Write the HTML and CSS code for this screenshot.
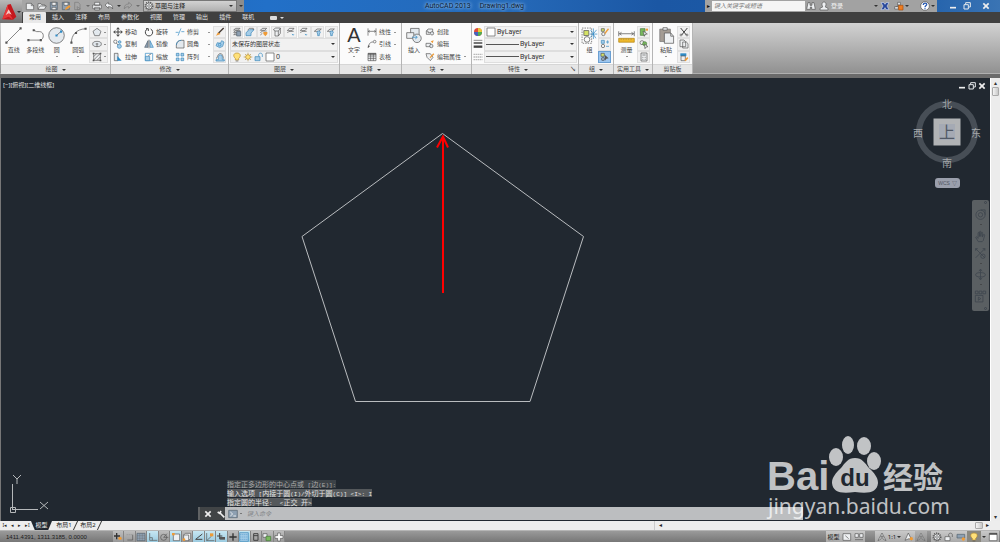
FILE: index.html
```html
<!DOCTYPE html>
<html lang="zh-CN">
<head>
<meta charset="utf-8">
<title>AutoCAD 2013 Drawing1.dwg</title>
<link rel="stylesheet" href="styles.css">
</head>
<body>
<svg class="defs" aria-hidden="true">
  <symbol id="new" viewBox="0 0 30 30"><path class="paper" d="M4 7h15l7 7v12H4z"/><path d="M19 7v7h7"/></symbol>
  <symbol id="open" viewBox="0 0 30 30"><path class="paper" d="M3 25V8h9l3 4h9v5"/><path class="paper" d="M3 25l6-10h19l-6 10z"/></symbol>
  <symbol id="save" viewBox="0 0 30 30"><path class="steel" d="M4 4h21v22H4z"/><path class="paper" d="M9 4h12v9H9zM9 19h12v7H9z"/></symbol>
  <symbol id="saveas" viewBox="0 0 30 30"><path class="steel" d="M4 4h21v22H4z"/><path class="paper" d="M9 4h12v9H9z"/><path class="gold" d="M12 27l2-7 11-8 4 5-11 8z"/></symbol>
  <symbol id="export" viewBox="0 0 30 30"><path d="M5 4h11l5 6v16H5zM12 17l10 6-8 4z"/></symbol>
  <symbol id="print" viewBox="0 0 30 30"><path class="paper" d="M8 4h15v9H8zM2 12h26v11H2zM8 19h15v8H8z"/></symbol>
  <symbol id="undo" viewBox="0 0 30 30"><path class="paper" d="M3 12L13 4v5c9 0 14 5 13 15-3-6-7-7-13-7v5z"/></symbol>
  <symbol id="redo" viewBox="0 0 30 30"><path d="M27 12L17 4v5C8 9 3 14 4 24c3-6 7-7 13-7v5z"/></symbol>
  <symbol id="gear" viewBox="0 0 30 30"><circle class="dash" cx="15" cy="15" r="11"/><circle class="paper" cx="15" cy="15" r="9"/><circle cx="15" cy="15" r="4"/></symbol>
  <symbol id="line" viewBox="0 0 48 48"><path d="M4 44L44 4"/><path class="ink" d="M1 41h6v6H1zM41 1h6v6h-6z"/></symbol>
  <symbol id="pline" viewBox="0 0 48 48"><path d="M4 37h34c11-3 11-23-2-24h-9l-8-4"/><path class="ink" d="M1 34h6v6H1zM36 34h6v6h-6zM16 6h6v6h-6z"/></symbol>
  <symbol id="circle" viewBox="0 0 48 48"><circle class="pale" cx="24" cy="24" r="22"/><path d="M24 24L36 13"/><path class="azure" d="M21 21h6v6h-6zM34 10h6v6h-6z"/></symbol>
  <symbol id="arc" viewBox="0 0 48 48"><path d="M4 44C4 24 17 6 44 5"/><path class="ink" d="M1 41h6v6H1zM14 14h6v6h-6zM41 2h6v6h-6z"/></symbol>
  <symbol id="polygon" viewBox="0 0 30 30"><path class="pale" d="M15 4l12 9-5 13H8L3 13z"/></symbol>
  <symbol id="ellipse" viewBox="0 0 30 30"><ellipse class="pale" cx="15" cy="15" rx="13" ry="8"/><path d="M15 12v12M11 15h8"/></symbol>
  <symbol id="hatch" viewBox="0 0 30 30"><path class="paper" d="M5 5h20v20H5zM5 14L14 5M5 24L24 5M15 25l10-10"/><path class="ink" d="M2 2h5v5H2zM23 2h5v5h-5zM2 23h5v5H2zM23 23h5v5h-5z"/></symbol>
  <symbol id="move" viewBox="0 0 30 30"><path class="firm" d="M15 3v24M3 15h24M11 7l4-5 4 5M11 23l4 5 4-5M7 11l-5 4 5 4M23 11l5 4-5 4"/></symbol>
  <symbol id="rotate" viewBox="0 0 30 30"><path class="firm" d="M10 6a11 11 0 1 0 10 0M6 5h7v7"/></symbol>
  <symbol id="trim" viewBox="0 0 30 30"><path class="azline" d="M2 16h9M19 14h9"/><path class="azline" d="M9 26L18 4"/></symbol>
  <symbol id="copy" viewBox="0 0 30 30"><circle cx="7" cy="8" r="5"/><circle class="sky" cx="20" cy="9" r="4"/><circle class="sky" cx="19" cy="22" r="6"/><path d="M10 12l5 6"/></symbol>
  <symbol id="mirror" viewBox="0 0 30 30"><path class="steel" d="M12 5v20H2z"/><path class="sky" d="M18 5v20h10z"/><path d="M15 2v26"/></symbol>
  <symbol id="fillet" viewBox="0 0 30 30"><path class="pale" d="M4 27V18C5 9 10 4 19 4h8v23z"/><path class="azline" d="M4 18C5 9 10 4 19 4"/></symbol>
  <symbol id="stretch" viewBox="0 0 30 30"><path class="pale" d="M4 4h11v22H4z"/><path class="azure" d="M13 12l13 14H13z"/></symbol>
  <symbol id="scale" viewBox="0 0 30 30"><path class="azline" d="M4 4h22v22H4z"/><path class="sky" d="M4 13h13v13H4z"/><path d="M13 11l9-6"/></symbol>
  <symbol id="array" viewBox="0 0 30 30"><path class="sky" d="M4 4h8v8H4zM18 4h8v8h-8zM4 18h8v8H4z"/><path class="sky" d="M18 18h8v8h-8z"/></symbol>
  <symbol id="brush" viewBox="0 0 30 30"><path class="gold" d="M3 26l6-10 8 5z"/><path class="dark" d="M11 18L26 3"/></symbol>
  <symbol id="explode" viewBox="0 0 30 30"><path class="sky" d="M3 20l4-9 9 2 4-8 7 4-4 13-9 4z"/><circle class="azline" cx="14" cy="17" r="4"/></symbol>
  <symbol id="offset" viewBox="0 0 30 30"><path class="sky" d="M3 23h7v-7c0-10 12-10 12 0v7h6v4H3z"/><path d="M3 20c4 0 4-13 11-15s9 4 12 15"/></symbol>
  <symbol id="layer" viewBox="0 0 30 30"><path class="paper" d="M5 9l6-5h13l-5 5zM5 16l6-5h13l-5 5zM5 23l6-5h13l-5 5z"/><path class="steel" d="M14 13h12v14H14z"/></symbol>
  <symbol id="layer2" viewBox="0 0 30 30"><path class="sky" d="M3 17L14 8h13l-9 10v8H3z"/><path d="M8 10l5-6h12v5"/></symbol>
  <symbol id="layer3" viewBox="0 0 30 30"><path class="paper" d="M4 10l6-6h13l-6 6zM4 18l6-6h13M4 24l6-5"/><path class="gold" d="M13 15h12v6l-6 7-6-7z"/></symbol>
  <symbol id="layer4" viewBox="0 0 30 30"><path class="paper" d="M4 8l7-5h14v16l-6 8H9V12z"/><path d="M9 12h10v15M19 12l6-8"/></symbol>
  <symbol id="layer5" viewBox="0 0 30 30"><path class="paper" d="M4 11l6-7h14l-6 7zM4 18l5-5h14"/><path class="azure" d="M6 25h14l-3-5 9 4"/></symbol>
  <symbol id="layer6" viewBox="0 0 30 30"><path class="paper" d="M4 13l8-7h13l-8 7z"/><path class="sky" d="M12 16c1-6 10-5 10 0l-3 5v5h-5v-5z"/></symbol>
  <symbol id="bulb" viewBox="0 0 30 30"><path class="lamp" d="M15 3c-12 0-12 11-5 16v5h10v-5c7-5 7-16-5-16z"/><path d="M11 27h8"/></symbol>
  <symbol id="sun" viewBox="0 0 30 30"><path class="ray" d="M15 2v26M2 15h26M6 6l18 18M24 6L6 24"/><circle class="lamp" cx="15" cy="15" r="7"/></symbol>
  <symbol id="lock" viewBox="0 0 30 30"><path class="sky" d="M3 14h15v12H3z"/><path class="azline" d="M14 13V8c0-6 11-6 11 0v7"/></symbol>
  <symbol id="swatch" viewBox="0 0 30 30"><path class="white" d="M3 3h24v24H3z"/></symbol>
  <symbol id="dim" viewBox="0 0 30 30"><path d="M3 4v22M27 4v22M4 13h22M8 10l-4 3 4 3M22 10l4 3-4 3"/></symbol>
  <symbol id="leader" viewBox="0 0 30 30"><path d="M4 26C6 14 9 9 18 9"/><circle cx="23" cy="8" r="4"/><path class="ink" d="M2 27l1-8 6 3z"/></symbol>
  <symbol id="table" viewBox="0 0 30 30"><path class="paper" d="M3 4h24v22H3zM3 12h24M3 19h24M11 5v21M19 5v21"/><path class="ink" d="M3 4h24v4H3z"/></symbol>
  <symbol id="insert" viewBox="0 0 48 48"><path class="pale" d="M13 4h24v22H13z"/><path class="paper" d="M2 16h20v16H2z"/><circle class="pale" cx="31" cy="32" r="12"/><path class="azline" d="M17 29h14M26 24l6 5-6 5"/></symbol>
  <symbol id="create" viewBox="0 0 30 30"><path class="paper" d="M4 12L9 6h14v11H9v-5zM4 12v10h11"/><circle class="pale" cx="21" cy="19" r="5"/></symbol>
  <symbol id="edit" viewBox="0 0 30 30"><path class="paper" d="M3 13h14v10H3z"/><circle class="pale" cx="19" cy="21" r="5"/><path class="gold" d="M17 7l9-3-3 9z"/></symbol>
  <symbol id="attr" viewBox="0 0 30 30"><path class="paper" d="M3 5h13l8 11-8 10L6 16z"/><path class="gold" d="M14 16L25 4l3 3-12 12z"/></symbol>
  <symbol id="wheel" viewBox="0 0 30 30"><circle class="wheel1" cx="15" cy="15" r="12"/><path class="wheel2" d="M15 15V3a12 12 0 0 1 12 12z"/><path class="wheel3" d="M15 15h12a12 12 0 0 1-12 12z"/><path class="wheel4" d="M15 15v12A12 12 0 0 1 3 15z"/></symbol>
  <symbol id="weight" viewBox="0 0 30 30"><path d="M2 4h26"/><path class="mid" d="M2 12h26"/><path class="thick" d="M2 23h26"/></symbol>
  <symbol id="ltype" viewBox="0 0 30 30"><path class="dots" d="M2 7h26M2 15h26M2 23h26"/></symbol>
  <symbol id="group" viewBox="0 0 48 48"><path class="dashline" d="M3 3h27v43H3z"/><path class="lime" d="M8 10h14v14H8z"/><circle cx="17" cy="35" r="8"/><path class="azline" d="M24 20h22M26 30L44 8M27 8l15 24M35 4v30"/></symbol>
  <symbol id="ungroup" viewBox="0 0 30 30"><path class="lime" d="M4 5h9v8H4z"/><circle cx="10" cy="21" r="5"/><path class="gold" d="M13 18L24 4l3 3-11 14z"/></symbol>
  <symbol id="groupedit" viewBox="0 0 30 30"><path class="sky" d="M4 4h9v9H4z"/><circle cx="9" cy="21" r="5"/><path class="azline" d="M18 9h9M23 4v10M18 22h9"/></symbol>
  <symbol id="groupsel" viewBox="0 0 30 30"><path class="lime" d="M3 4h10v9H3z"/><circle class="steel" cx="9" cy="21" r="5"/><path class="ink" d="M14 8l12 11-7 1-4 6z"/></symbol>
  <symbol id="measure" viewBox="0 0 48 48"><path d="M2 12v14M46 12v14M4 19h40M10 15l-6 4 6 4M38 15l6 4-6 4"/><path class="amber" d="M2 32h44v11H2z"/><path class="thin" d="M9 33v4M16 33v4M23 33v4M30 33v4M37 33v4"/></symbol>
  <symbol id="qsel" viewBox="0 0 30 30"><path class="leaf" d="M4 5h14v20H4z"/><path class="paper" d="M12 12l13 9-7 1-2 6z"/><path class="gold" d="M20 5h7v6h-7z"/></symbol>
  <symbol id="selall" viewBox="0 0 30 30"><circle class="paper" cx="9" cy="11" r="6"/><circle class="leaf" cx="17" cy="14" r="6"/><path class="paper" d="M16 15l11 8-6 1-3 5z"/></symbol>
  <symbol id="calc" viewBox="0 0 30 30"><path class="paper" d="M6 3h18v24H6z"/><path d="M10 9h10M10 16h2M14 16h2M18 16h2M10 22h2M14 22h2M18 22h2"/></symbol>
  <symbol id="paste" viewBox="0 0 48 48"><path class="clip" d="M5 6h30v35H5z"/><path class="paper" d="M14 2h12v7H14zM18 17h18l8 9v20H18z"/><path d="M36 17v9h8"/></symbol>
  <symbol id="cut" viewBox="0 0 30 30"><path class="firm" d="M5 3l17 21M25 3L8 24"/><circle cx="6" cy="24" r="3"/><circle cx="24" cy="24" r="3"/></symbol>
  <symbol id="clip" viewBox="0 0 30 30"><path class="paper" d="M3 3h12l5 5v15H3zM11 9h11l5 5v13H11z"/></symbol>
  <symbol id="match" viewBox="0 0 30 30"><path class="azure" d="M4 4h18v8H4z"/><path class="paper" d="M6 12h13v14H6z"/><path class="gold" d="M16 24l9-9 3 4-8 9z"/></symbol>
  <symbol id="binoc" viewBox="0 0 30 30"><path class="paper" d="M6 5h6v8h6V5h6l4 20H17v-7h-4v7H2z"/></symbol>
  <symbol id="person" viewBox="0 0 30 30"><path class="paper" d="M15 3c8 0 7 12 3 14l9 5v5H3v-5l9-5C8 15 7 3 15 3z"/></symbol>
  <symbol id="exchange" viewBox="0 0 30 30"><path class="navy" d="M3 5h9l3 5 3-5h9l-6 10 6 11h-9l-3-6-3 6H3l6-11z"/></symbol>
  <symbol id="cloud" viewBox="0 0 30 30"><path class="paper" d="M11 4h8v8h-8zM2 17h11v7H2z"/><path d="M15 12L7 17"/><path class="orange" d="M14 13h13v14H14z"/></symbol>
  <symbol id="help" viewBox="0 0 30 30"><circle class="white" cx="15" cy="15" r="13"/><path class="question" d="M10 12c0-8 11-7 10-1-1 4-5 3-5 8M15 22v3"/></symbol>
  <symbol id="min" viewBox="0 0 30 30"><path class="bright" d="M6 20h18"/></symbol>
  <symbol id="restore" viewBox="0 0 30 30"><path class="glow" d="M11 10V5h14v13h-5M6 11h13v13H6z"/></symbol>
  <symbol id="close" viewBox="0 0 30 30"><path class="bright" d="M7 7l16 16M23 7L7 23"/></symbol>
  <symbol id="wrench" viewBox="0 0 30 30"><path class="bright" d="M12 12l13 13M5 9l6 4 4-7"/></symbol>
  <symbol id="prompt" viewBox="0 0 30 30"><path class="steel" d="M2 4h26v22H2z"/><path class="glow" d="M7 9l7 6-7 6M16 21h8"/></symbol>
  <symbol id="plus" viewBox="0 0 30 30"><path class="mid" d="M15 4v22M4 15h22"/></symbol>
  <symbol id="infer" viewBox="0 0 30 30"><path class="mid" d="M11 3v19M3 12h18"/><circle class="gold" cx="21" cy="19" r="5"/></symbol>
  <symbol id="snap" viewBox="0 0 30 30"><path class="dots" d="M5 8h16"/><path d="M23 8v16H7"/></symbol>
  <symbol id="grid" viewBox="0 0 30 30"><path class="steel" d="M3 4h24v22H3z"/><path class="thin" d="M3 11h24M3 19h24M11 4v22M19 4v22"/></symbol>
  <symbol id="ortho" viewBox="0 0 30 30"><path d="M5 3v22h23M5 17h8v8"/></symbol>
  <symbol id="polar" viewBox="0 0 30 30"><circle cx="14" cy="16" r="9"/><path d="M14 16h14M14 16L24 5"/></symbol>
  <symbol id="osnap" viewBox="0 0 30 30"><path class="paper" d="M7 6h19v20H7z"/><path class="gold" d="M3 3h8v7H3z"/></symbol>
  <symbol id="osnap3" viewBox="0 0 30 30"><path class="paper" d="M5 9l5-5h16v15l-6 7H5zM5 9h15v17"/><circle class="gold" cx="6" cy="23" r="4"/></symbol>
  <symbol id="track" viewBox="0 0 30 30"><path class="firm" d="M25 6L5 22h20"/></symbol>
  <symbol id="ducs" viewBox="0 0 30 30"><path d="M5 3v23h23M5 26L20 12"/><path class="gold" d="M15 4h10v9H15z"/></symbol>
  <symbol id="dyn" viewBox="0 0 30 30"><path class="firm" d="M11 3v18M3 12h16"/><path class="ink" d="M11 15h16v8H11z"/></symbol>
  <symbol id="tpy" viewBox="0 0 30 30"><path class="sky" d="M2 2h26v26H2z"/><path class="mesh" d="M4 8h22M4 15h22M4 22h22"/></symbol>
  <symbol id="qp" viewBox="0 0 30 30"><path class="firm" d="M8 5h13v20H8zM8 11h13"/></symbol>
  <symbol id="sc" viewBox="0 0 30 30"><path class="paper" d="M3 5h12v11H3z"/><path class="leaf" d="M12 13h14v13H12z"/></symbol>
  <symbol id="cross" viewBox="0 0 30 30"><path class="white" d="M11 3h8v8h8v8h-8v8h-8v-8H3v-8h8z"/></symbol>
  <symbol id="model" viewBox="0 0 30 30"><path class="paper" d="M3 5h23v20H3zM10 11l10 9"/></symbol>
  <symbol id="views" viewBox="0 0 30 30"><path class="paper" d="M3 5h10v11H3zM17 5h10v11H17zM3 23h24"/></symbol>
  <symbol id="anno" viewBox="0 0 30 30"><path class="paper" d="M15 3l12 23-9-5v-9h-6v9l-9 5z"/></symbol>
  <symbol id="annogold" viewBox="0 0 30 30"><path class="paper" d="M13 3l10 21-8-4-12 5z"/><circle class="gold" cx="22" cy="20" r="5"/></symbol>
  <symbol id="padlock" viewBox="0 0 30 30"><path class="paper" d="M3 14h15v12H3z"/><path d="M14 13V8c0-6 11-6 11 0v7"/></symbol>
  <symbol id="hardware" viewBox="0 0 30 30"><path class="steel" d="M3 7h23v11H3z"/><circle class="gold" cx="22" cy="21" r="5"/></symbol>
  <symbol id="clean" viewBox="0 0 30 30"><path class="white" d="M4 4h23v22H4z"/><path class="mid" d="M4 6h23"/></symbol>
  <symbol id="swheel" viewBox="0 0 48 48"><circle cx="24" cy="25" r="17"/><circle cx="24" cy="25" r="8"/><path d="M41 25V7H25"/></symbol>
  <symbol id="hand" viewBox="0 0 48 48"><path d="M16 43L6 27c2-4 6-1 9 4V11c2-4 5-3 5 0v13-17c2-4 5-3 5 0v17l2-14c3-4 5-1 5 2l-1 14 4-9c4-2 5 1 4 4l-5 18-4 4z"/></symbol>
  <symbol id="zoomall" viewBox="0 0 48 48"><path d="M6 6l34 34M40 6L6 40M6 14V6h8M32 6h8v8"/><circle cx="33" cy="34" r="8"/></symbol>
  <symbol id="orbit" viewBox="0 0 48 48"><ellipse cx="24" cy="25" rx="18" ry="8"/><path d="M24 5v38M18 12l6-8 6 8M18 36l6 8 6-8"/></symbol>
  <symbol id="motion" viewBox="0 0 48 48"><path d="M5 4h10v10H5zM19 4h10v10H19zM33 4h10v10H33zM5 20h28v24H5zM16 26l9 6-9 6z"/></symbol>
</svg>

<header class="header">
  <button class="logo" aria-label="应用程序菜单">
    <svg class="logo-mark" viewBox="0 0 48 54"><path class="logo-back" d="M4 49L20 5l9-2 17 38-10 9z"/><path class="logo-fold" d="M4 49l16-44 3 22 13 23-13-9z"/><path class="logo-light" d="M14 36l9-17 9 16-9-4z"/></svg>
    <i class="caret"></i>
  </button>
  <div class="titlebar">
    <nav class="quick" aria-label="快速访问">
      <button aria-label="新建"><svg class="ico"><use href="#new"/></svg></button>
      <button aria-label="打开"><svg class="ico"><use href="#open"/></svg></button>
      <button aria-label="保存"><svg class="ico"><use href="#save"/></svg></button>
      <button aria-label="另存为"><svg class="ico"><use href="#saveas"/></svg></button>
      <button class="wide faded" aria-label="输出"><svg class="ico"><use href="#export"/></svg><i class="caret"></i></button>
      <button aria-label="打印"><svg class="ico"><use href="#print"/></svg></button>
      <button class="wide" aria-label="放弃"><svg class="ico"><use href="#undo"/></svg><i class="caret"></i></button>
      <button class="wide faded" aria-label="重做"><svg class="ico"><use href="#redo"/></svg><i class="caret"></i></button>
    </nav>
    <label class="workspace"><svg class="ico"><use href="#gear"/></svg><select aria-label="工作空间"><option>草图与注释</option></select><i class="caret"></i></label>
    <button class="more" aria-label="自定义"><i class="caret"></i></button>
    <div class="caption"><span>AutoCAD 2013</span><span>Drawing1.dwg</span></div>
    <div class="info">
      <button class="expand" aria-label="展开">▸</button>
      <input class="search" type="text" placeholder="键入关键字或短语" aria-label="搜索">
      <button aria-label="查找"><svg class="ico"><use href="#binoc"/></svg></button>
      <button class="login"><svg class="ico"><use href="#person"/></svg><span>登录</span><i class="caret"></i></button>
      <button aria-label="Exchange"><svg class="ico"><use href="#exchange"/></svg></button>
      <button class="wide" aria-label="连接"><svg class="ico"><use href="#cloud"/></svg><i class="caret"></i></button>
      <button class="wide helpbtn" aria-label="帮助"><svg class="ico"><use href="#help"/></svg><i class="caret"></i></button>
    </div>
    <div class="winctl">
      <button aria-label="最小化"><svg class="ico"><use href="#min"/></svg></button>
      <button aria-label="还原"><svg class="ico"><use href="#restore"/></svg></button>
      <button class="shut" aria-label="关闭"><svg class="ico"><use href="#close"/></svg></button>
    </div>
  </div>
  <nav class="tabs">
    <button class="active">常用</button><button>插入</button><button>注释</button><button>布局</button><button>参数化</button><button>视图</button><button>管理</button><button>输出</button><button>插件</button><button>联机</button>
    <button class="toggle" aria-label="最小化功能区"><span class="pill"></span><i class="caret"></i></button>
  </nav>
</header>

<section class="ribbon">
  <div class="panel p-draw">
    <div class="body">
      <button class="big"><svg class="pic"><use href="#line"/></svg>直线</button>
      <button class="big"><svg class="pic"><use href="#pline"/></svg>多段线</button>
      <button class="big"><svg class="pic"><use href="#circle"/></svg>圆<i class="caret"></i></button>
      <button class="big"><svg class="pic"><use href="#arc"/></svg>圆弧<i class="caret"></i></button>
      <div class="stack">
        <button class="box" aria-label="多边形"><svg class="ico"><use href="#polygon"/></svg><i class="caret"></i></button>
        <button class="box" aria-label="椭圆"><svg class="ico"><use href="#ellipse"/></svg><i class="caret"></i></button>
        <button class="box" aria-label="图案填充"><svg class="ico"><use href="#hatch"/></svg><i class="caret"></i></button>
      </div>
    </div>
    <button class="foot">绘图<i class="caret"></i></button>
  </div>
  <div class="panel p-modify">
    <div class="body">
      <div class="tools">
        <button><svg class="ico"><use href="#move"/></svg>移动</button>
        <button><svg class="ico"><use href="#rotate"/></svg>旋转</button>
        <button><svg class="ico"><use href="#trim"/></svg>修剪<i class="caret"></i></button>
        <button><svg class="ico"><use href="#copy"/></svg>复制</button>
        <button><svg class="ico"><use href="#mirror"/></svg>镜像</button>
        <button><svg class="ico"><use href="#fillet"/></svg>圆角<i class="caret"></i></button>
        <button><svg class="ico"><use href="#stretch"/></svg>拉伸</button>
        <button><svg class="ico"><use href="#scale"/></svg>缩放</button>
        <button><svg class="ico"><use href="#array"/></svg>阵列<i class="caret"></i></button>
      </div>
      <div class="stack">
        <button class="box" aria-label="删除"><svg class="ico"><use href="#brush"/></svg></button>
        <button class="box" aria-label="分解"><svg class="ico"><use href="#explode"/></svg></button>
        <button class="box" aria-label="偏移"><svg class="ico"><use href="#offset"/></svg></button>
      </div>
    </div>
    <button class="foot">修改<i class="caret"></i></button>
  </div>
  <div class="panel p-layer">
    <div class="body stack">
      <div class="strip">
        <button class="box" aria-label="图层特性"><svg class="ico"><use href="#layer"/></svg></button>
        <button class="box" aria-label="置为当前"><svg class="ico"><use href="#layer2"/></svg></button>
        <button class="box" aria-label="匹配图层"><svg class="ico"><use href="#layer3"/></svg></button>
        <button class="box" aria-label="上一个"><svg class="ico"><use href="#layer4"/></svg></button>
        <button class="box" aria-label="隔离"><svg class="ico"><use href="#layer5"/></svg></button>
        <button class="box" aria-label="取消隔离"><svg class="ico"><use href="#layer5"/></svg></button>
        <button class="box" aria-label="冻结"><svg class="ico"><use href="#layer6"/></svg></button>
        <button class="box" aria-label="关闭图层"><svg class="ico"><use href="#layer6"/></svg></button>
      </div>
      <label class="combo"><select aria-label="图层状态"><option>未保存的图层状态</option></select><i class="caret"></i></label>
      <label class="combo"><svg class="ico"><use href="#bulb"/></svg><svg class="ico"><use href="#sun"/></svg><svg class="ico"><use href="#lock"/></svg><svg class="ico"><use href="#swatch"/></svg><select class="number" aria-label="图层"><option>0</option></select><i class="caret"></i></label>
    </div>
    <button class="foot">图层<i class="caret"></i></button>
  </div>
  <div class="panel p-note">
    <div class="body">
      <button class="big"><span class="letter">A</span>文字<i class="caret"></i></button>
      <div class="tools one">
        <button><svg class="ico"><use href="#dim"/></svg>线性<i class="caret"></i></button>
        <button><svg class="ico"><use href="#leader"/></svg>引线<i class="caret"></i></button>
        <button><svg class="ico"><use href="#table"/></svg>表格</button>
      </div>
    </div>
    <button class="foot">注释<i class="caret"></i></button>
  </div>
  <div class="panel p-block">
    <div class="body">
      <button class="big"><svg class="pic"><use href="#insert"/></svg>插入</button>
      <div class="tools one">
        <button><svg class="ico"><use href="#create"/></svg>创建</button>
        <button><svg class="ico"><use href="#edit"/></svg>编辑</button>
        <button><svg class="ico"><use href="#attr"/></svg>编辑属性<i class="caret"></i></button>
      </div>
    </div>
    <button class="foot">块<i class="caret"></i></button>
  </div>
  <div class="panel p-prop">
    <div class="body stack">
      <div class="prop"><svg class="ico"><use href="#wheel"/></svg><label class="combo"><svg class="ico"><use href="#swatch"/></svg><select aria-label="颜色"><option>ByLayer</option></select><i class="caret"></i></label></div>
      <div class="prop"><svg class="ico"><use href="#weight"/></svg><label class="combo"><span class="rule"></span><select aria-label="线宽"><option>ByLayer</option></select><i class="caret"></i></label></div>
      <div class="prop"><svg class="ico"><use href="#ltype"/></svg><label class="combo"><span class="rule"></span><select aria-label="线型"><option>ByLayer</option></select><i class="caret"></i></label></div>
    </div>
    <button class="foot">特性<i class="caret"></i><span class="launch">↘</span></button>
  </div>
  <div class="panel p-group">
    <div class="body">
      <button class="big"><svg class="pic"><use href="#group"/></svg>组</button>
      <div class="stack">
        <button class="box" aria-label="解除编组"><svg class="ico"><use href="#ungroup"/></svg></button>
        <button class="box" aria-label="组编辑"><svg class="ico"><use href="#groupedit"/></svg></button>
        <button class="box on" aria-label="组选择"><svg class="ico"><use href="#groupsel"/></svg></button>
      </div>
    </div>
    <button class="foot">组<i class="caret"></i></button>
  </div>
  <div class="panel p-util">
    <div class="body">
      <button class="big"><svg class="pic"><use href="#measure"/></svg>测量<i class="caret"></i></button>
      <div class="stack">
        <button class="box" aria-label="快速选择"><svg class="ico"><use href="#qsel"/></svg></button>
        <button class="box" aria-label="全部选择"><svg class="ico"><use href="#selall"/></svg></button>
        <button class="box" aria-label="计算器"><svg class="ico"><use href="#calc"/></svg></button>
      </div>
    </div>
    <button class="foot">实用工具<i class="caret"></i></button>
  </div>
  <div class="panel p-clip">
    <div class="body">
      <button class="big"><svg class="pic"><use href="#paste"/></svg>粘贴<i class="caret"></i></button>
      <div class="stack">
        <button class="box" aria-label="剪切"><svg class="ico"><use href="#cut"/></svg></button>
        <button class="box" aria-label="复制剪裁"><svg class="ico"><use href="#clip"/></svg></button>
        <button class="box" aria-label="特性匹配"><svg class="ico"><use href="#match"/></svg></button>
      </div>
    </div>
    <button class="foot">剪贴板</button>
  </div>
</section>

<main class="work">
  <div class="canvas">
    <svg class="drawing" viewBox="1 0 989 443" preserveAspectRatio="none">
      <path class="shape" d="M442.500 55.500L583.500 158.500 530 323.500H355.500L302 158.500z"/>
      <path class="arrow" d="M443 215V60M437 69.500l6-11 5 11"/>
    </svg>
    <div class="viewlabel">[−][俯视][二维线框]</div>
    <div class="docctl">
      <button aria-label="最小化"><svg class="ico"><use href="#min"/></svg></button>
      <button aria-label="还原"><svg class="ico"><use href="#restore"/></svg></button>
      <button aria-label="关闭"><svg class="ico"><use href="#close"/></svg></button>
    </div>
    <svg class="cube" viewBox="0 0 70 72">
      <circle class="ring" cx="35" cy="36" r="28"/>
      <path class="face" d="M21.500 22.500h27v27h-27z"/><path class="face-in" d="M27 28h16v16H27z"/>
      <text class="top" x="35" y="42">上</text>
      <text x="35" y="12">北</text><text x="35" y="71">南</text><text x="6" y="41">西</text><text x="64" y="41">东</text>
    </svg>
    <button class="wcs">WCS <span class="down">▽</span></button>
    <div class="navbar">
      <span class="dot"></span>
      <button aria-label="控制盘"><svg class="nav"><use href="#swheel"/></svg><i class="caret"></i></button>
      <button aria-label="平移"><svg class="nav"><use href="#hand"/></svg></button>
      <button aria-label="缩放"><svg class="nav"><use href="#zoomall"/></svg><i class="caret"></i></button>
      <button aria-label="动态观察"><svg class="nav"><use href="#orbit"/></svg><i class="caret"></i></button>
      <button aria-label="ShowMotion"><svg class="nav"><use href="#motion"/></svg></button>
      <span class="dot"></span>
    </div>
    <svg class="ucs" viewBox="0 0 42 40"><path d="M4.500 10v26M4.500 35.500H30M2.500 33.500h5v5h-5zM5 1l4 4 4-4M9 5v5M32 28l8 7M40 28l-8 7"/></svg>
    <div class="console">
      <div class="log">
        <p class="old">指定正多边形的中心点或<span> [</span>边<span>(E)]:</span></p>
        <p>输入选项<span> [</span>内接于圆<span>(I)/</span>外切于圆<span>(C)] &lt;I&gt;: I</span></p>
        <p>指定圆的半径<span>:  &lt;</span>正交<span> </span>开<span>&gt;</span></p>
      </div>
      <div class="cmd">
        <div class="grip"><button aria-label="关闭"><svg class="ico"><use href="#close"/></svg></button><button aria-label="自定义"><svg class="ico"><use href="#wrench"/></svg></button></div>
        <label class="entry"><svg class="ico"><use href="#prompt"/></svg><i class="caret"></i><input type="text" placeholder="键入命令" aria-label="命令"></label>
      </div>
    </div>
    <svg class="mark" viewBox="0 0 190 90">
      <text class="bai" x="1" y="59">Bai</text>
      <g class="paw"><ellipse cx="70" cy="26" rx="7" ry="9"/><ellipse cx="82" cy="14" rx="6" ry="9"/><ellipse cx="98" cy="15" rx="7" ry="9"/><ellipse cx="108" cy="30" rx="7" ry="9"/><path d="M89 27c7 0 10 5 14 10 5 5 9 9 9 15-1 9-8 11-23 9-15 2-22 0-23-9 0-6 4-10 9-15 4-5 7-10 14-10z"/></g>
      <text class="du" x="89" y="55">du</text>
      <text class="jy" x="117" y="57">经验</text>
      <text class="url" x="2" y="83">jingyan.baidu.com</text>
    </svg>
  </div>
  <div class="vscroll"><button aria-label="向上">▴</button><span class="thumb"></span><button class="end" aria-label="向下">▾</button></div>
</main>

<div class="sheets">
  <div class="steps"><button aria-label="第一个">I◂</button><button aria-label="上一个">◂</button><button aria-label="下一个">▸</button><button aria-label="最后一个">▸I</button></div>
  <button class="sheet current">模型</button><button class="sheet">布局1</button><button class="sheet">布局2</button>
  <div class="hscroll"><button aria-label="向左">◂</button><span class="thumb"></span><button aria-label="向右">▸</button></div>
</div>

<footer class="status">
  <div class="coords">1411.4391, 1311.3185, 0.0000</div>
  <div class="modes">
    <button aria-label="推断"><svg class="ico"><use href="#infer"/></svg></button>
    <button aria-label="捕捉"><svg class="ico"><use href="#snap"/></svg></button>
    <button aria-label="栅格"><svg class="ico"><use href="#grid"/></svg></button>
    <button class="on" aria-label="正交"><svg class="ico"><use href="#ortho"/></svg></button>
    <button aria-label="极轴"><svg class="ico"><use href="#polar"/></svg></button>
    <button class="on" aria-label="对象捕捉"><svg class="ico"><use href="#osnap"/></svg></button>
    <button aria-label="三维捕捉"><svg class="ico"><use href="#osnap3"/></svg></button>
    <button class="on" aria-label="追踪"><svg class="ico"><use href="#track"/></svg></button>
    <button class="on" aria-label="动态UCS"><svg class="ico"><use href="#ducs"/></svg></button>
    <button class="on" aria-label="动态输入"><svg class="ico"><use href="#dyn"/></svg></button>
    <button aria-label="线宽"><svg class="ico"><use href="#plus"/></svg></button>
    <button class="on" aria-label="透明度"><svg class="ico"><use href="#tpy"/></svg></button>
    <button aria-label="快捷特性"><svg class="ico"><use href="#qp"/></svg></button>
    <button aria-label="选择循环"><svg class="ico"><use href="#sc"/></svg></button>
    <button aria-label="注释监视器"><svg class="ico"><use href="#cross"/></svg></button>
  </div>
  <div class="tray">
    <button class="space">模型</button>
    <button aria-label="布局"><svg class="ico"><use href="#model"/></svg></button>
    <button aria-label="快速查看"><svg class="ico"><use href="#views"/></svg></button>
    <span class="gap"></span>
    <button class="ratio"><svg class="ico"><use href="#anno"/></svg>1:1<i class="caret"></i></button>
    <button aria-label="注释可见性"><svg class="ico"><use href="#annogold"/></svg></button>
    <button class="faded" aria-label="自动比例"><svg class="ico"><use href="#anno"/></svg></button>
    <span class="slot"></span>
    <button aria-label="工作空间"><svg class="ico"><use href="#gear"/></svg></button>
    <button aria-label="锁定"><svg class="ico"><use href="#padlock"/></svg></button>
    <button aria-label="硬件加速"><svg class="ico"><use href="#hardware"/></svg></button>
    <button class="lit" aria-label="隔离对象"><svg class="ico"><use href="#bulb"/></svg></button>
    <button class="narrow" aria-label="菜单"><i class="caret"></i></button>
    <button aria-label="全屏"><svg class="ico"><use href="#clean"/></svg></button>
  </div>
</footer>
</body>
</html>
```

FILE: styles.css
```css
* { box-sizing: border-box; }
body {
  margin: 0;
  height: 100vh;
  overflow: hidden;
  display: flex;
  flex-direction: column;
  background: #6d6d6d;
  color: #444;
  font: 6px/8px "Noto Sans", "Noto Sans CJK SC", sans-serif;
}
button, input, select {
  margin: 0; padding: 0; border: 0; background: none;
  color: inherit; font: inherit; appearance: none; border-radius: 0; outline: 0;
}
button { display: flex; align-items: center; justify-content: center; white-space: nowrap; }
p { margin: 0; }
.defs { position: absolute; width: 0; height: 0; }
.caret { flex: none; border: 2px solid transparent; border-top-color: #333; border-bottom: 0; }

/* icons */
.ico { width: 10px; height: 10px; flex: none; }
.pic { width: 17px; height: 17px; flex: none; }
svg { fill: none; stroke: #555; stroke-width: 2; }
.firm { stroke: #444; stroke-width: 3; }
.paper { fill: #eef0f2; }
.white { fill: #fff; }
.pale { fill: #e3e9ee; }
.steel { fill: #8ea0b2; stroke: #53606e; }
.sky { fill: #a5cde8; stroke: #3a86ba; }
.azure { fill: #2e8bc6; stroke: none; }
.azline { stroke: #318ac3; }
.ink { fill: #555; stroke: none; }
.dark { stroke: #443a33; stroke-width: 4; }
.gold { fill: #ef9b36; stroke: none; }
.amber { fill: #eeb92c; stroke: #b18312; }
.lamp { fill: #ffe17a; stroke: #b88d2b; }
.ray { stroke: #b5944a; }
.lime { fill: #d5e266; }
.leaf { fill: #79b95d; stroke: #46783a; }
.clip { fill: #a49c94; stroke: #777; }
.navy { fill: #28479b; stroke: #ccd6ef; }
.orange { fill: #ed7d22; stroke: #a94d08; }
.question { stroke: #2356b1; stroke-width: 4; }
.bright { stroke: #eee; stroke-width: 5; }
.glow { stroke: #e6e9ec; stroke-width: 3; }
.mid { stroke: #333; stroke-width: 4; }
.thick { stroke: #444; stroke-width: 7; }
.thin { stroke: #666; stroke-width: 1; }
.dash { stroke-width: 5; stroke-dasharray: 3 3; }
.dots { stroke: #999; stroke-width: 4; stroke-dasharray: 3 3; }
.mesh { stroke: #5b9fd0; stroke-width: 3; stroke-dasharray: 3 3; }
.dashline { stroke-dasharray: 4 3; }
.wheel1 { fill: #dd4b3c; stroke: none; }
.wheel2 { fill: #ebc83b; stroke: none; }
.wheel3 { fill: #4fae55; stroke: none; }
.wheel4 { fill: #4462c0; stroke: none; }

/* header */
.header { flex: none; display: grid; grid-template: 12px 11px / 22px 1fr; }
.logo {
  grid-row: 1 / 3; gap: 0; border-radius: 0 0 3px 0;
  background: linear-gradient(#b9b9b9, #6f6f6f);
}
.logo-mark { width: 16px; height: 18px; stroke: none; }
.logo-back { fill: #c5181d; }
.logo-fold { fill: #e7383a; }
.logo-light { fill: #f8c9c5; }
.titlebar { display: flex; background: linear-gradient(90deg, #1d62b5, #2270c8 25%, #2569b8 50%, #1b57a4 65%, #1c5ca9 90%, #3a74b4); min-width: 0; }
.quick { display: flex; width: 121px; padding-left: 2px; background: #a6a6a6; }
.quick button, .info button { width: 12px; }
.quick .wide { width: 19px; gap: 3px; }
.faded { opacity: .5; }
.workspace {
  display: flex; align-items: center; width: 94px; padding: 0 3px 0 0; gap: 1px;
  background: linear-gradient(#d2d2d2, #b0b0b0); border: 1px solid #777; color: #222;
}
.workspace select { flex: 1; min-width: 0; }
.more { width: 7px; background: #8d8d8d; }
.caption { flex: 1; display: flex; justify-content: center; gap: 9px; color: #0b1c33; font: 7px/12px Roboto, sans-serif; text-shadow: 0 0 4px #a9cdf2, 0 0 3px #9cc3ec; }
.info { display: flex; align-items: center; width: 232px; background: #a2a2a2; }
.info .expand { width: 7px; color: #111; }
.info .search { width: 93px; height: 10px; padding: 0 2px; background: #f5f5f5; font-style: italic; }
.search::placeholder { color: #777; }
.info .login { width: 62px; gap: 2px; padding: 0 1px 0 2px; justify-content: flex-start; color: #f5f5f5; }
.login .caret { margin-left: auto; }
.info .wide { width: 20px; gap: 1px; }
.info .helpbtn { width: 26px; justify-content: flex-end; padding-right: 2px; }
.winctl { display: flex; width: 63px; padding-left: 9px; gap: 1px; }
.winctl button { width: 13px; }
.winctl .shut { width: 24px; }
.tabs { display: flex; background: #404040; color: #e2e2e2; padding-left: 1px; }
.tabs button { padding: 0 5px 0 6px; line-height: 11px; }
.tabs .active { background: #e9e9e9; color: #333; border-radius: 1px 1px 0 0; }
.tabs .toggle { padding-left: 11px; gap: 3px; }
.toggle .caret { border-top-color: #ddd; }
.pill { width: 7px; height: 4px; border-radius: 1px; background: #ddd; }

/* ribbon */
.ribbon {
  flex: none; display: flex; height: 55px; padding: 0 0 4px 1px;
  background: linear-gradient(#d2d2d2, #919191 50px, #b0b0b0 50px, #b0b0b0 51px, #6b6b6b 51px);
}
.panel { display: flex; flex-direction: column; background: #fbfbfb; border-right: 1px solid #b5b5b5; }
.p-draw { width: 110px; }
.p-modify { width: 118px; }
.p-layer { width: 111px; }
.p-note { width: 62px; }
.p-block { width: 70px; }
.p-prop { width: 107px; }
.p-group { width: 35px; }
.p-util { width: 39px; }
.p-clip { width: 40px; }
.body { flex: 1; display: flex; padding: 3px 2px 1px; min-height: 0; }
.foot { height: 10px; gap: 4px; background: #e6e6e6; border-top: 1px solid #d6d6d6; line-height: 9px; }
.p-prop .foot { padding-left: 36px; }
.launch { margin: 0 2px 0 auto; }
.big { flex: 1; min-width: 21px; flex-direction: column; justify-content: flex-start; gap: 2px; padding-top: 1px; }
.big .caret { border-width: 1px; border-bottom: 0; }
.p-group .big, .p-util .big, .p-clip .big { min-width: 16px; }
.letter { font: 20px/17px "Liberation Sans", sans-serif; color: #333; }
.stack { display: grid; grid-template-rows: repeat(3, 1fr); }
.box { background: #f1f1f1; border: 1px solid #e0e0e0; min-width: 13px; gap: 2px; }
.box .caret { border-width: 1px; border-bottom: 0; }
.box.on { background: #9dc6ee; border-color: #6a9fd2; }
.p-draw .box { width: 19px; }
.tools { flex: 1; display: grid; grid-template: repeat(3, 1fr) / 31px 31px 1fr; }
.tools.one { grid-template-columns: 1fr; }
.tools button { justify-content: flex-start; gap: 2px; }
.tools .caret { margin: 0 3px 0 auto; border-width: 1px; border-bottom: 0; }
.p-note .big { flex: none; width: 24px; }
.p-note .tools { padding-left: 1px; }
.p-block .big { flex: none; width: 20px; min-width: 0; }
.p-block .tools { padding-left: 1px; }
.p-layer .body, .p-prop .body { padding: 3px 1px 1px; }
.strip { display: flex; justify-content: space-between; }
.combo { display: flex; align-items: center; gap: 1px; padding: 0 2px 0 1px; background: #f1f1f1; border: 1px solid #dedede; min-width: 0; }
.combo select { flex: 1; min-width: 0; color: #333; }
.combo .number { font-size: 7px; }
.prop { display: flex; align-items: center; gap: 1px; }
.prop .combo { flex: 1; align-self: stretch; font: 7px/8px Roboto, sans-serif; }
.rule { width: 33px; border-top: 1px solid #555; }

/* drawing area */
.work { flex: 1; display: flex; min-height: 0; }
.canvas { position: relative; flex: 1; background: #212830; border-left: 1px solid #777; }
.drawing { position: absolute; inset: 0; width: 100%; height: 100%; }
.shape { stroke: #b9bcbf; stroke-width: 1; }
.arrow { stroke: #f00; stroke-width: 2; }
.viewlabel { position: absolute; left: 2px; top: 3px; color: #e0e0e0; }
.docctl { position: absolute; right: 3px; top: 3px; display: flex; }
.cube { position: absolute; right: 8px; top: 18px; width: 70px; height: 72px; stroke: none; }
.ring { stroke: #474e56; stroke-width: 6; }
.face { fill: #b1b3b5; }
.face-in { fill: #a5aab4; }
.cube text { fill: #a5a8ab; font: 10px "Noto Sans CJK SC", sans-serif; text-anchor: middle; }
.cube .top { fill: #515966; font-size: 16px; }
.wcs { position: absolute; right: 30px; top: 100px; width: 25px; height: 10px; border-radius: 3px; background: #9a9fac; color: #4e5563; font: 5px/8px "Liberation Sans", sans-serif; gap: 2px; }
.navbar { position: absolute; right: 1px; top: 122px; width: 17px; height: 111px; padding: 1px 2px; display: flex; flex-direction: column; justify-content: space-between; background: #5a5f62; border-radius: 2px; }
.navbar button { flex-direction: column; gap: 3px; }
.navbar .caret { border-width: 1px; border-bottom: 0; }
.nav { width: 13px; height: 13px; stroke: #3d454d; stroke-width: 3; }
.dot { align-self: flex-end; width: 3px; height: 3px; border: 1px solid #3d454d; border-radius: 2px; }
.ucs { position: absolute; left: 7px; bottom: 7px; width: 42px; height: 40px; stroke: #b5b8ba; stroke-width: 1; }
.console { position: absolute; left: 197px; right: 187px; bottom: 1px; }
.log { display: flex; flex-direction: column; align-items: flex-start; padding-left: 29px; color: #e3e3e3; font: 7px/8px "Noto Sans CJK SC", sans-serif; }
.log p { white-space: pre; background: #54585b; margin-bottom: 1px; height: 8px; }
.log .old { background: #3c4247; color: #aaa; }
.log span { font: 6px/8px "Liberation Mono", monospace; }
.cmd { display: flex; height: 13px; }
.grip { display: flex; gap: 3px; width: 27px; padding-left: 3px; background: #414446; border-left: 2px solid #606264; }
.entry { flex: 1; display: flex; align-items: center; gap: 2px; padding-left: 3px; background: #bcbec0; }
.entry .caret { border-width: 1px; border-bottom: 0; }
.entry input { flex: 1; padding-left: 3px; font-size: 6px; font-style: italic; }
.entry input::placeholder { color: #808386; }
.mark { position: absolute; right: 34px; bottom: 0; width: 190px; height: 90px; stroke: none; }
.mark text, .paw { fill: rgb(255 255 255 / .72); }
.mark .bai { font: bold 40px "Liberation Sans", sans-serif; }
.mark .du { font: bold 24px "Liberation Sans", sans-serif; fill: #212830; text-anchor: middle; }
.mark .jy { font: bold 30px "Noto Sans CJK SC", sans-serif; }
.mark .url { font: 21px "Noto Sans", sans-serif; }
.vscroll { display: flex; flex-direction: column; width: 10px; background: #ececec; border-left: 1px solid #fff; }
.vscroll button { height: 9px; color: #333; }
.thumb { background: linear-gradient(90deg, #f4f4f4, #c9c9c9); border: 1px solid #aaa; border-radius: 1px; }
.vscroll .thumb { height: 9px; margin: 0 1px; }
.vscroll .end { margin-top: auto; }

/* layout tabs */
.sheets { flex: none; display: flex; height: 9px; background: #ededed; color: #222; line-height: 9px; padding-left: 1px; }
.steps { display: flex; width: 30px; font-size: 5px; }
.steps button { flex: 1; }
.sheet { position: relative; width: 24px; }
.sheet::after { content: ""; position: absolute; right: 0; top: 0; height: 9px; border-right: 1px solid #333; transform: skewX(-25deg); }
.current { background: #212830; color: #eee; width: 21px; clip-path: polygon(0 0, 100% 0, 82% 100%, 18% 100%); }
.hscroll { display: flex; align-items: center; margin-left: auto; width: 346px; padding: 0 11px 0 4px; border-left: 1px solid #ccc; }
.hscroll .thumb { width: 8px; height: 7px; margin: 0 3px 0 auto; }

/* status bar */
.status { flex: none; display: flex; height: 12px; background: linear-gradient(#9a9a9a, #777); border-top: 1px solid #b5b5b5; color: #1c1c1c; }
.coords { width: 113px; padding-left: 6px; font: 6px/12px "Liberation Sans", sans-serif; }
.modes { display: flex; width: 172px; }
.modes button { flex: 1; background: linear-gradient(#bdbdbd, #989898); border-right: 1px solid #858585; }
.modes .on { background: linear-gradient(#c6e6f2, #9bcbe0); }
.tray { display: flex; margin-left: auto; padding-right: 1px; }
.tray button { width: 12px; background: linear-gradient(#c9c9c9, #a9a9a9); }
.tray .space { width: 15px; }
.gap { width: 10px; }
.tray .ratio { width: 28px; gap: 1px; }
.slot { width: 4px; }
.tray .lit { width: 14px; background: #8a8880; }
.tray .narrow { width: 6px; }
```
